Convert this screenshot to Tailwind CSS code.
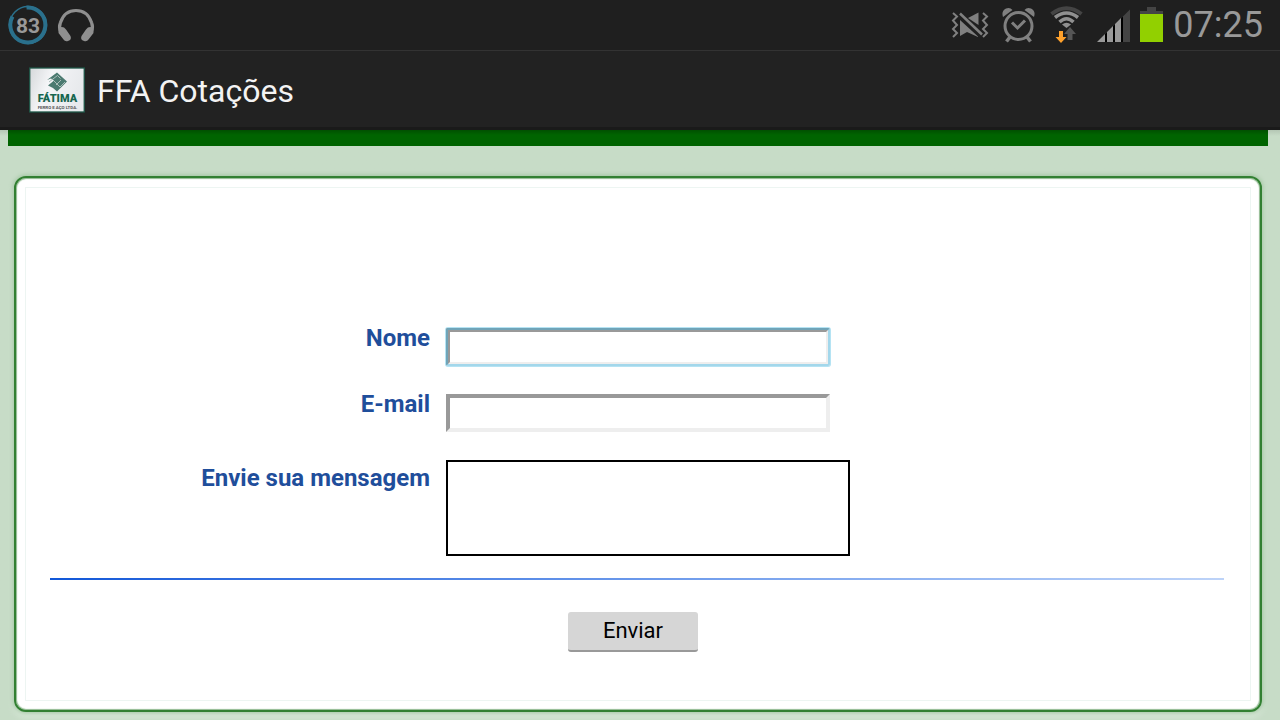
<!DOCTYPE html>
<html lang="pt-BR">
<head>
<meta charset="utf-8">
<meta name="viewport" content="width=device-width, initial-scale=1">
<title>FFA Cotações</title>
<script src="https://cdn.jsdelivr.net/npm/@tailwindcss/browser@4"></script>
</head>
<body class="flex min-h-screen flex-col bg-[#c7dcc7] font-['Roboto',sans-serif]">
<div class="flex h-[51px] items-start justify-between border-b border-[#333] bg-[#1f1f1f] pr-[17px] pl-2">
  <div class="flex gap-2 pt-[5px]">
    <svg class="size-10" viewBox="0 0 40 40" role="img" aria-label="83">
      <circle cx="20" cy="20" r="18.500" fill="none" stroke="#2a708c" stroke-width="1.500"/>
      <path d="M18.500 2.500A17.500 17.500 0 1 1 4.500 11.500" fill="none" stroke="#2a708c" stroke-width="4"/>
      <text x="20" y="27.500" text-anchor="middle" font-family="Roboto" font-weight="700" font-size="21" fill="#999">83</text>
    </svg>
    <svg class="size-10" viewBox="0 0 40 40" fill="#8f8f8f" aria-hidden="true">
      <path d="M4.500 27C2.500 22 3.500 20 4.500 17.500C7 10 12 5.500 20 5.500S33 10 35.500 17.500C36.500 20 37.500 22 35.500 27" fill="none" stroke="#8f8f8f" stroke-width="3.200"/>
      <path d="M3 23Q7 20.500 10 24.500L14.500 31Q16 35 12 36Q9 37 7.500 34.500L2.500 28ZM37 23Q33 20.500 30 24.500L25.500 31Q24 35 28 36Q31 37 32.500 34.500L37.500 28Z"/>
    </svg>
  </div>
  <div class="flex items-start">
    <svg class="h-[50px] w-[190px]" viewBox="950 0 190 50" fill="none" aria-hidden="true">
      <g fill="#808080">
        <path d="M960 20L978 36.500V37L967 32L960 36Z"/>
        <path d="M968 18L978.500 12.500V25Z"/>
        <path d="M960 13.500L982 34.500" stroke="#808080" stroke-width="2.500"/>
      </g>
      <path d="M953 13L957 16.500L953 20.500L957 25L953 29L957 33L953 37" stroke="#808080" stroke-width="2"/>
      <path d="M983 13L987 16.500L983 20.500L987 25L983 29L987 33L983 37" stroke="#808080" stroke-width="2"/>
      <circle cx="1018.500" cy="26" r="13.500" stroke="#808080" stroke-width="3"/>
      <path d="M1012 22.500L1017.500 28L1025 20.500" stroke="#808080" stroke-width="3"/>
      <path d="M1010 37L1006.500 41.500M1027 37L1030.500 41.500" stroke="#808080" stroke-width="3.500"/>
      <path d="M1003 17Q1001 11 1006 8.500Q1010 7 1012.500 10ZM1034 17Q1036 11 1031 8.500Q1027 7 1024.500 10Z" fill="#808080"/>
      <path d="M1051.500 14Q1066.500 2.500 1081.500 14" stroke="#444" stroke-width="4"/>
      <path d="M1055 17.500Q1066.500 8.500 1078 17.500M1059.500 22Q1066.500 15.500 1073.500 22" stroke="#909090" stroke-width="3.500"/>
      <path d="M1062 24.500Q1066.500 21 1071 24.500L1066.500 28Z" fill="#909090"/>
      <path d="M1070 27L1076 34H1072.500V40H1067.500V34H1064Z" fill="#555"/>
      <path d="M1059 31H1063V37H1066.500L1061 43L1055.500 37H1059Z" fill="#ffa12b"/>
      <path d="M1097 42L1130 9.500V42Z" fill="#444"/>
      <path d="M1097 42L1123 16.500V42Z" fill="#000"/>
      <path d="M1097 42L1105 34V42ZM1107 42V32L1113 26V42ZM1115 42V24L1121 18V42Z" fill="#999"/>
    </svg>
    <svg class="h-[50px] w-[23px]" viewBox="0 0 23 50" aria-hidden="true">
      <path d="M7 7H16V11H23V14H0V11H7Z" fill="#444"/><path d="M0 14H23V42H0Z" fill="#92d000"/>
    </svg>
    <time class="ml-[10px] text-[36px] leading-[50px] text-[#999]">07:25</time>
  </div>
</div>
<header class="flex h-[79px] items-center gap-3 border-b-3 border-[#1a1a1a] bg-[#222] pt-[2px] pl-[29px]">
  <svg class="h-[46px] w-14" viewBox="0 0 56 46" role="img" aria-label="Fátima Ferro e Aço Ltda.">
    <defs><linearGradient id="silver" x2="1" y2=".3"><stop stop-color="#d5d8da"/><stop offset=".4" stop-color="#f4f5f7"/><stop offset="1" stop-color="#e7e9ec"/></linearGradient></defs>
    <rect x=".75" y="1" width="54.500" height="44" fill="url(#silver)" stroke="#1d5546" stroke-width="1.300"/>
    <path d="M18 13L28 5.500L38 14.500L28 24.500L24 21L19 18.500L25 13.500L22 11.500Z" fill="#4b7a70"/>
    <path d="M20 15L28.500 8.500L31.500 11.500M25 14L31 20L36 15M27 18L32 13" fill="none" stroke="#a9bdb8" stroke-width="1"/>
    <text x="28.500" y="35" text-anchor="middle" font-family="Roboto" font-weight="900" font-size="11" fill="#17664f">FÁTIMA</text>
    <text x="28.500" y="42" text-anchor="middle" font-family="Roboto" font-weight="700" font-size="4.400" fill="#555">FERRO E AÇO LTDA.</text>
  </svg>
  <h1 class="pt-[2px] text-[32px] leading-10 text-[#f3f3f3]">FFA Cotações</h1>
</header>
<main class="flex grow flex-col bg-linear-to-b from-[#b4c7b4] to-[#c7dcc7] to-[6px] pr-[18px] pb-2 pl-[14px]">
  <div class="-mr-[6px] -ml-[6px] h-4 bg-linear-to-b from-[#005000] to-[#006400] to-[5px]"></div>
  <section class="mt-[30px] flex grow flex-col rounded-[12px] border-2 border-[#328032] bg-white p-[9px] shadow-[inset_0_0_1px_1px_#8fba8f,0_0_4px_1px_#9fc49f,0_5px_6px_#dceadc]">
    <form class="grow border border-[#edf5f2] pt-[136px] pr-[26px] pl-6">
      <div class="grid grid-cols-[380fr_778fr] gap-x-4 text-2xl leading-7 font-bold text-[#1f4e9b]">
        <label for="nome" class="text-right">Nome</label>
        <div class="h-[70px] pt-1"><input id="nome" type="text" class="block h-[38px] w-96 rounded-[2px] border-4 border-t-[#999] border-r-[#eee] border-b-[#eee] border-l-[#999] bg-white px-1 text-xl font-normal text-black shadow-[0_0_0_1px_#b5e3f3] outline-2 -outline-offset-2 outline-[#33b5e5]/40"></div>
        <label for="email" class="-mt-1 text-right">E-mail</label>
        <div class="h-[66px]"><input id="email" type="text" class="block h-[38px] w-96 border-4 border-t-[#999] border-r-[#eee] border-b-[#eee] border-l-[#999] bg-white px-1 text-xl font-normal text-black"></div>
        <label for="mensagem" class="pt-1 text-right">Envie sua mensagem</label>
        <textarea id="mensagem" class="block h-24 w-[404px] resize-none border-2 border-black bg-white px-1 text-xl font-normal text-black outline-none"></textarea>
      </div>
      <hr class="mt-[22px] h-[2px] border-0 bg-linear-to-r from-[#1057d8] to-[#bdd3f8]">
      <div class="mt-8 flex justify-center pr-2">
        <button type="submit" class="h-10 w-[130px] rounded-[3px] border-b-2 border-[#999] bg-[#d6d6d6] text-[22px] leading-7 text-black">Enviar</button>
      </div>
    </form>
  </section>
</main>
</body>
</html>
